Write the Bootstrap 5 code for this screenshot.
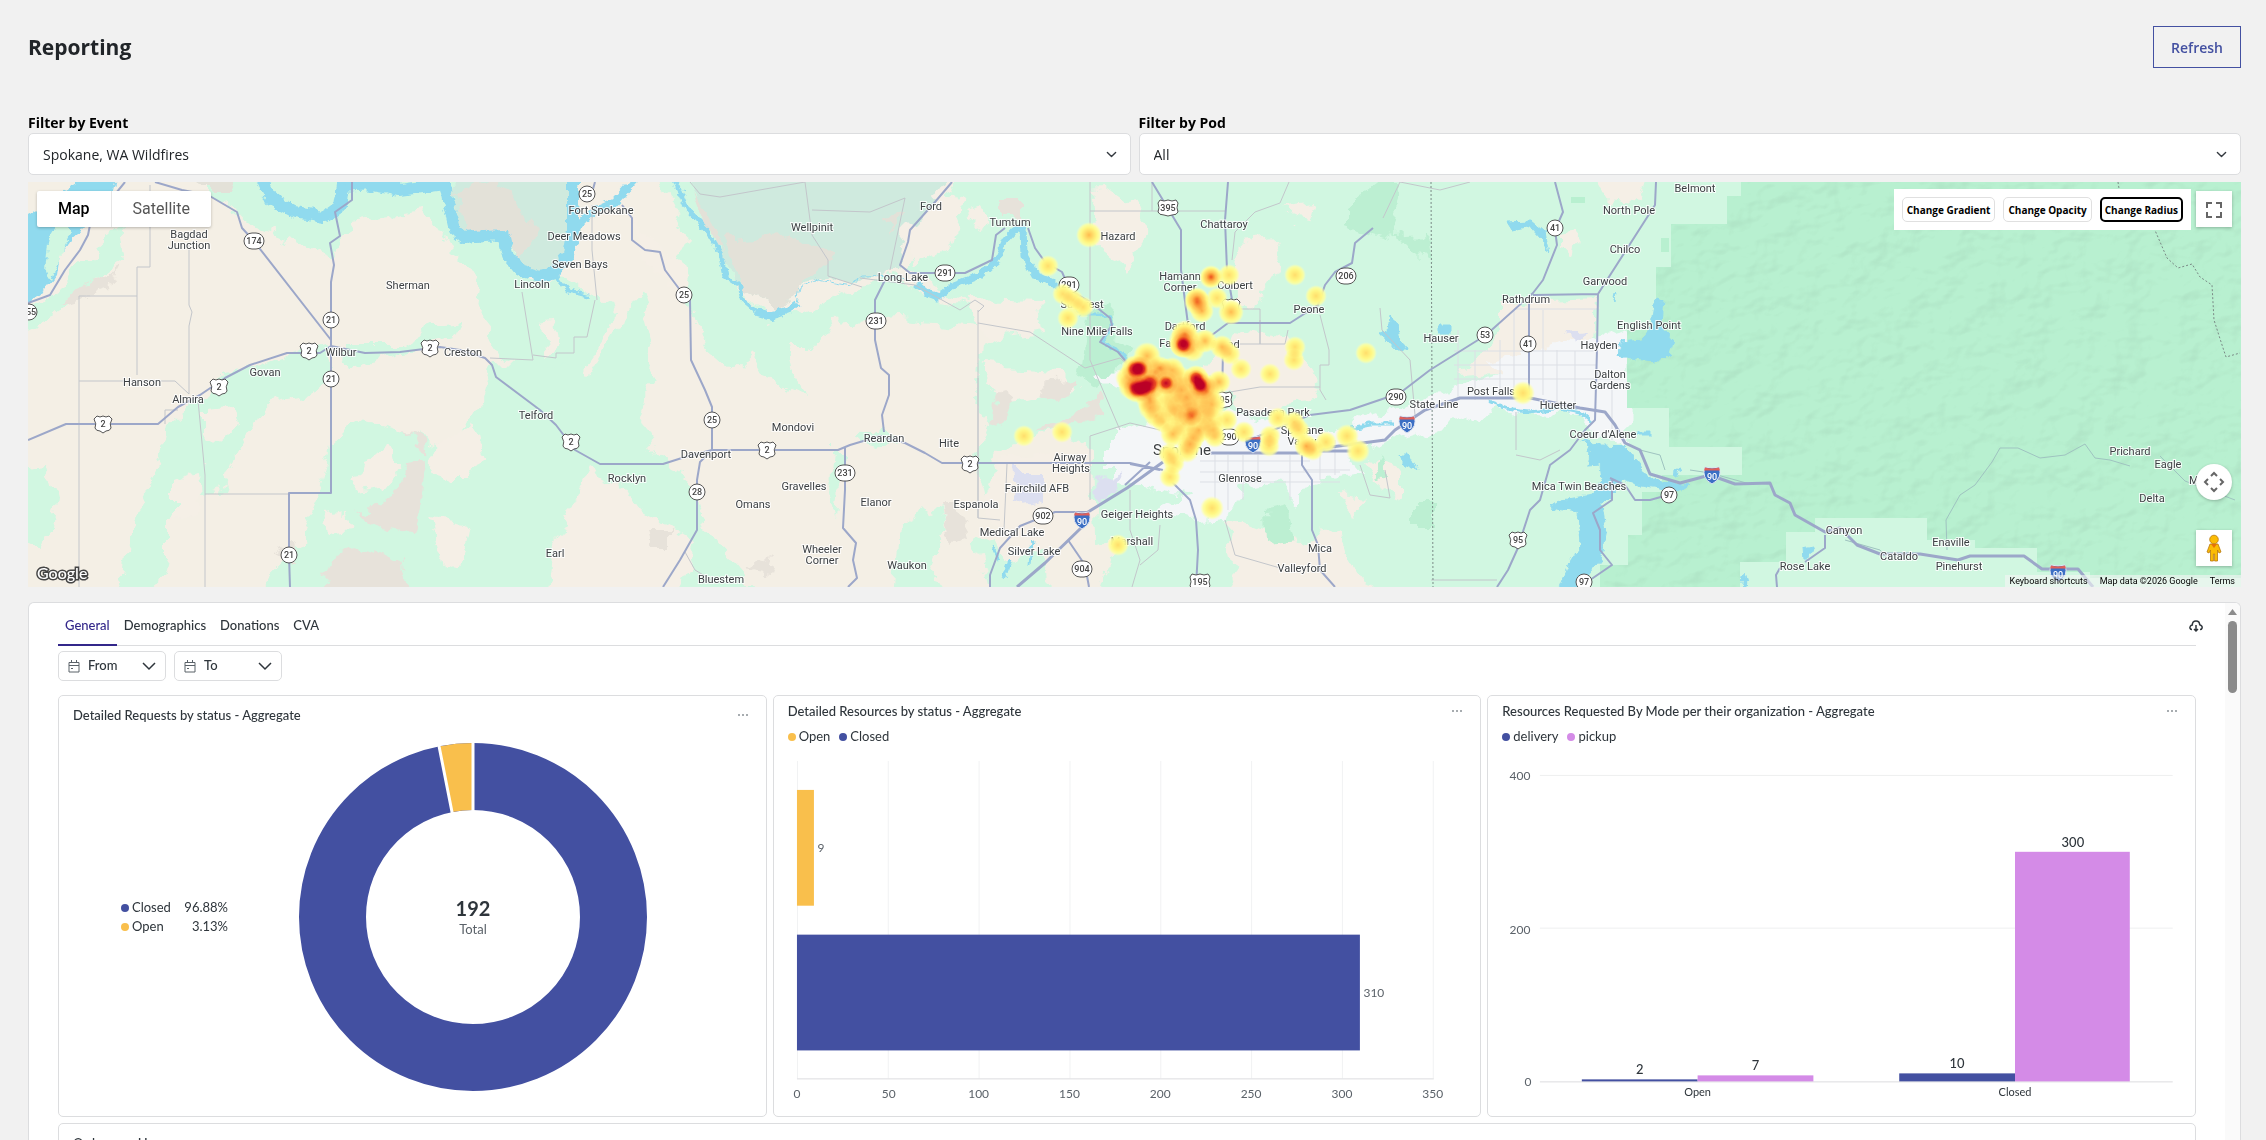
<!DOCTYPE html>
<html lang="en">
<head>
<meta charset="utf-8">
<meta name="viewport" content="width=device-width, initial-scale=1">
<title>Reporting</title>
<link href="https://cdn.jsdelivr.net/npm/bootstrap@5.3.0/dist/css/bootstrap.min.css" rel="stylesheet">
<style>
  :root { --ink:#2e353b; --indigo:#4350a1; --amber:#f9bf4c; --orchid:#d48be7; --line:#dcdddf; }
  body { background:#f1f1f1; font-family:"Open Sans","Noto Sans",sans-serif; font-size:14px; color:#212529; }
  .page-shell { height:100vh; padding:0 25px 0 28px; }
  .page-head { padding-top:26px; height:113px; }
  .page-title { font-size:21px; line-height:42px; font-weight:700; }
  .btn-refresh { height:42px; padding:0 17px; border:1px solid var(--indigo); border-radius:0; color:var(--indigo); font-size:14px; font-weight:600; }
  .filter-label { font-size:14px; line-height:20px; font-weight:700; color:#000; }
  .filter-select { height:42px; padding-left:14px; border-color:var(--line); border-radius:5px; font-size:14px; background-size:13px 11px; }
  .map-box { height:405px; margin-top:7px; font-family:Roboto,sans-serif; }
  .map-box > svg { width:100%; height:100%; display:block; }
  .town { font:11px Roboto,sans-serif; fill:#3c4043; stroke:#fff; stroke-width:2px; stroke-opacity:.85; paint-order:stroke; text-anchor:middle; }
  .town-lg { font-size:15px; }
  .route-no text { font:500 9px Roboto,sans-serif; fill:#444; text-anchor:middle; }
  .route-no .on-blue { fill:#fff; }
  .over { position:absolute; background:#fff; box-shadow:0 1px 3px rgba(0,0,0,.25); }
  .map-type { left:9px; top:9px; height:36px; border-radius:2px; }
  .map-type button { border:0; background:none; font-size:16px; color:#565656; padding:0 21px; }
  .map-type .chosen { color:#000; font-weight:500; border-right:1px solid #e6e6e6; }
  .heat-tools { right:50px; top:7px; height:41px; padding:8px; gap:8px; box-shadow:none; }
  .heat-tools button { border:1px solid #e0e0e0; border-radius:5px; background:#fff; font:700 10px/22px "Open Sans",sans-serif; padding:0 4px; color:#000; }
  .heat-tools .chosen { border:2px solid #000; line-height:20px; padding:0 3px; }
  .ctl { right:9px; width:36px; height:36px; border:0; padding:0; }
  .ctl-full { top:9px; } .ctl-move { top:282px; border-radius:50%; } .ctl-peg { top:348px; }
  .map-foot { right:0; bottom:0; font-size:9px; line-height:12px; gap:12px; background:rgba(245,245,245,.6); box-shadow:none; padding:0 6px 0 5px; }
  .map-foot a, .map-foot span { color:#000; text-decoration:none; }
  .map-logo { left:6px; bottom:1px; background:none; box-shadow:none; }
  .board { margin-top:15px; border:1px solid var(--line); border-bottom:0; border-radius:6px 6px 0 0; background:#fff; font-family:Lato,sans-serif; color:var(--ink); min-height:0; }
  .board-body { padding:3px 29px 0; min-width:0; }
  .board-tabs { height:40px; border-bottom:1px solid var(--line); }
  .board-tabs nav button { border:0; background:none; padding:3px 7px 0; font-size:13px; height:40px; font-weight:500; color:var(--ink); border-bottom:2px solid transparent; }
  .board-tabs nav .chosen { color:#33278a; border-color:#33278a; }
  .btn-cloud { border:0; background:none; padding:0; margin-right:-7px; line-height:0; }
  .date-row { padding-top:5px; }
  .btn-date { width:108px; height:30px; border:1px solid var(--line); border-radius:5px; background:#fff; padding:0 9px; font-size:13px; font-weight:500; color:var(--ink); gap:8px; }
  .tiles { display:grid; grid-template-columns:repeat(3,1fr); gap:6px; margin-top:14px; }
  .tile { border:1px solid var(--line); border-radius:5px; background:#fff; height:422px; }
  .tile-wide { grid-column:1/-1; height:200px; }
  .tile-head { height:30px; padding:0 16px 0 14px; }
  .tile-tall { height:36px; padding-top:2px; }
  .tile-name { font-size:13px; line-height:20px; font-weight:500; }
  .more { border:0; background:none; padding:0; width:14px; line-height:0; }
  .key { font-size:13px; line-height:20px; padding:0 14px; gap:9px; }
  .key i, .ratio-key i { width:8px; height:8px; border-radius:50%; display:inline-block; margin-right:3px; }
  .donut-row { padding-top:10px; }
  .ratio-key { font-size:13px; line-height:19px; width:107px; margin-left:62px; }
  .ratio-key td { padding:0; }
  .donut { margin-left:70px; width:350px; }
  .c-in { background:var(--indigo); } .c-am { background:var(--amber); } .c-or { background:var(--orchid); }
  .t12 { font:12px Lato,sans-serif; fill:#5b6269; text-anchor:middle; }
  .t11 { font:11px Lato,sans-serif; fill:var(--ink); text-anchor:middle; }
  .t13 { font:500 13px Lato,sans-serif; fill:var(--ink); text-anchor:middle; }
  .track { width:15px; background:#fafafa; padding-top:6px; gap:6px; }
  .thumb { width:9px; height:72px; border-radius:5px; background:#8b8b8b; }
</style>
</head>
<body>
<main class="page-shell d-flex flex-column overflow-hidden">
  <header class="page-head d-flex flex-shrink-0 justify-content-between align-items-start">
    <h1 class="page-title m-0">Reporting</h1>
    <button class="btn btn-refresh" type="button">Refresh</button>
  </header>
  <div class="row gx-2">
    <div class="col-6">
      <label class="filter-label d-block" for="event">Filter by Event</label>
      <select class="form-select filter-select" id="event"><option>Spokane, WA Wildfires</option></select>
    </div>
    <div class="col-6">
      <label class="filter-label d-block" for="pod">Filter by Pod</label>
      <select class="form-select filter-select" id="pod"><option>All</option></select>
    </div>
  </div>

  <section class="map-box position-relative overflow-hidden flex-shrink-0" aria-label="Request heat map">
    <svg viewBox="28 182 2213 405" preserveAspectRatio="xMidYMid slice">
      <defs>
        <filter id="rough" x="0" y="0" width="1" height="1"><feTurbulence type="fractalNoise" baseFrequency=".045" numOctaves="4" seed="7"/><feDisplacementMap in="SourceGraphic" scale="24" xChannelSelector="R" yChannelSelector="G"/></filter>
        <filter id="shore" x="-.1" y="-.1" width="1.2" height="1.2"><feTurbulence type="fractalNoise" baseFrequency=".12" numOctaves="3" seed="3"/><feDisplacementMap in="SourceGraphic" scale="8" xChannelSelector="R" yChannelSelector="G"/></filter>
        <filter id="relief" x="0" y="0" width="1" height="1" color-interpolation-filters="sRGB"><feTurbulence type="fractalNoise" baseFrequency=".03 .04" numOctaves="3" seed="11"/><feColorMatrix values="0 0 0 0 0  0 0 0 0 0  0 0 0 0 0  1 0 0 0 0"/><feDiffuseLighting surfaceScale="9" diffuseConstant="1.3" lighting-color="#fff"><feDistantLight azimuth="225" elevation="50"/></feDiffuseLighting><feComposite in2="SourceGraphic" operator="in"/></filter>
        <filter id="heat" x="0" y="0" width="1" height="1" color-interpolation-filters="sRGB">
          <feColorMatrix values="0 0 0 1 0  0 0 0 1 0  0 0 0 1 0  0 0 0 1 0"/>
          <feComponentTransfer>
            <feFuncR type="table" tableValues="1 1 1 1 1 1 .98 .95 .88 .74 .72"/>
            <feFuncG type="table" tableValues="1 1 .97 .9 .82 .74 .6 .42 .2 0 0"/>
            <feFuncB type="table" tableValues=".7 .6 .52 .45 .38 .32 .22 .15 .14 .15 .15"/>
            <feFuncA type="table" tableValues="0 .85 1 1 1 1 1 1 1 1 1"/>
          </feComponentTransfer>
        </filter>
        <radialGradient id="d3"><stop offset="0" stop-opacity=".34"/><stop offset=".5" stop-opacity=".2"/><stop offset="1" stop-opacity="0"/></radialGradient>
        <radialGradient id="d5"><stop offset="0" stop-opacity=".5"/><stop offset=".5" stop-opacity=".25"/><stop offset="1" stop-opacity="0"/></radialGradient>
        <radialGradient id="d8"><stop offset="0" stop-opacity=".88"/><stop offset=".35" stop-opacity=".72"/><stop offset=".65" stop-opacity=".22"/><stop offset="1" stop-opacity="0"/></radialGradient>
        <rect id="st" x="-8" y="-8" width="16" height="16" rx="8" fill="#fff" stroke="#555"/>
        <rect id="stw" x="-10" y="-8" width="20" height="16" rx="8" fill="#fff" stroke="#555"/>
        <path id="us" d="M-6-8Q-3-6 0-8Q3-6 6-8L9-5Q6 0 8 4Q7 7 3 7L0 9L-3 7Q-7 7-8 4Q-6 0-9-5Z" fill="#fff" stroke="#555"/>
        <path id="usw" d="M-8-8Q-4-6 0-8Q4-6 8-8L10-5Q8 0 10 4Q9 7 4 7L0 8L-4 7Q-9 7-10 4Q-8 0-10-5Z" fill="#fff" stroke="#555"/>
        <g id="ih"><path d="M-7-8Q0-6 7-8Q11 3 0 9Q-11 3-7-8Z" fill="#3c6fc4" stroke="#dfe5f2"/><path d="M-7-7.500Q0-5.500 7-7.500L8-4.500H-8Z" fill="#e0605a"/></g>
      </defs>
      <rect x="28" y="182" width="2213" height="405" fill="#f4efe5"/>
      <!-- vegetation -->
      <g filter="url(#rough)">
        <rect x="0" y="150" width="2300" height="480" fill="none"/>
        <g fill="#d1f7e1">
          <path d="M210 170H460L462 236H508L525 278L570 280L615 305L600 345L575 380L540 372L515 372L500 345L478 320L482 290L460 255L440 235L425 212L350 222L335 260L290 240L250 225L210 195Z"/>
          <path d="M20 470L46 467L54 500L50 532L38 548L20 540ZM20 310L60 290L80 262L120 225L125 260L85 290L50 320L20 330Z"/>
          <path d="M195 405L225 372L262 366L300 350L325 342L336 380L310 395L280 400L258 408L248 435L235 455L222 490L190 500L165 520L165 560L155 600H120L128 545L145 500L160 455L165 430Z"/>
          <path d="M335 345L400 345L440 322L462 320L455 338L410 352L350 365Z"/>
          <path d="M335 440L355 420L395 430L450 445L480 405L492 360L540 362L590 372L640 290L655 345L640 420L655 455L690 480L705 530L720 550L765 600H250L288 560L305 530L318 500Z"/>
          <path d="M655 170H690L724 260L748 300L770 322L800 312L890 275L930 300L970 305L978 325L900 318L835 322L815 348L785 348L790 372L806 394L770 382L752 352L730 372L700 345L688 300L665 265L690 240Z"/>
          <path d="M905 270L925 235L945 200L965 170H2280V620H1090L1100 586L1120 540L1094 545L1092 450L1060 430L990 455L1000 480L985 500L975 460L990 420L975 400L980 345L1020 320L960 300Z"/>
          <path d="M900 525L940 508L945 530L930 570L950 600H895ZM975 540L1040 530L1050 600H990ZM690 560L740 575L760 600H690Z"/>
          <path d="M835 450H845L840 520L832 490ZM850 440L880 424L905 440L880 446Z"/>
        </g>
        <g fill="#f5efe6">
          <path d="M545 600L553 545L575 500L590 470L625 490L640 512L700 545L670 600ZM440 440L472 425L480 455L470 478L445 478L432 460ZM360 462L392 448L402 465L385 487L355 492ZM432 520L470 525L462 562L445 568ZM325 515L346 512L350 532L328 535ZM205 408L232 405L238 425L215 445L205 435ZM175 480L200 470L203 510L175 515Z"/>
          <path d="M900 190L945 182L962 205L950 250L915 268L905 240ZM1092 190L1115 187L1138 205L1150 240L1125 272L1098 252ZM1240 244L1272 240L1280 262L1250 312L1225 285ZM1285 208L1315 204L1310 222L1292 220ZM1230 330L1290 338L1322 385L1310 402L1240 410L1200 372ZM970 300L1040 302L1045 332L1000 338L975 322ZM980 368L1060 372L1080 392L1000 402ZM1000 458L1090 450L1094 540L1005 560L985 500Z"/>
          <path d="M1500 302L1597 298L1592 368L1460 375L1500 330ZM1230 515L1300 542L1340 528L1350 560L1380 600H1240L1228 550ZM1340 495L1368 498L1350 518ZM1365 460L1400 470L1400 500L1380 490ZM1595 175H1650L1640 204L1610 200ZM1560 238L1578 235L1574 255L1560 252ZM630 220L690 270L680 300L650 270ZM970 210L985 205L990 220L975 225ZM540 325L555 322L560 345L545 355Z"/>
          <path d="M2144 230L2168 238L2160 258L2150 258ZM2008 390L2030 368L2045 382L2025 385L2012 395ZM2200 410L2228 396L2210 400Z" fill="#f6dfcb"/>
        </g>
        <g fill="#e7e2da">
          <path d="M405 432L425 440L428 455L412 445ZM405 465L428 462L418 512L412 532L390 530L355 510L385 506L400 482ZM340 550L358 545L402 562L410 600H318ZM270 560L295 540L298 565ZM80 290L118 270L108 290L60 305ZM650 530L672 530L672 550L655 550ZM1000 200H1025V220H1000ZM1040 385L1075 380L1075 395L1045 398ZM1000 390L1012 400L1005 425L990 420ZM1035 435L1100 395L1105 415L1060 430ZM940 505L955 505L965 540L950 550ZM745 568L775 556L770 572Z"/>
        </g>
        <g fill="#cfeade"><path d="M452 170H575L578 230L562 262L545 275L522 268L508 235L480 232L458 236Z"/><path d="M685 170H955L930 205L905 230L895 272L862 275L800 285L778 312L745 290L722 262L700 215Z"/></g>
        <path d="M455 190L500 182L540 230L520 262L508 232L470 234ZM722 240L790 235L830 260L800 285L778 312L745 290ZM690 195L708 215L720 250L700 225ZM885 215L900 210L895 235ZM185 170H232L228 190L200 190Z" fill="#e3e1d8"/>
        <path d="M1088 312L1116 300L1112 340L1132 345L1100 392L1078 375ZM1345 208L1380 182L1400 182L1390 238L1428 236L1432 268L1408 244L1345 225ZM1415 500H1435V526H1415ZM1265 510L1288 505L1294 540L1266 545ZM1382 455L1388 480L1375 478Z" fill="#bcefd2"/>
        <path d="M1110 432L1160 420L1200 410L1330 428L1400 408L1450 392L1500 372L1490 360L1590 340L1630 330L1628 445L1600 440L1580 415L1500 410L1420 432L1350 455L1360 478L1300 485L1300 505L1280 480L1240 485L1230 515L1190 518L1155 512L1190 495L1150 488L1110 475ZM1095 375L1135 372L1140 395L1110 390Z" fill="#f4f6f8"/>
        <path d="M1015 470H1045V500L1018 505ZM1095 480L1120 470L1122 490L1098 500ZM1565 332L1588 330L1580 345Z" fill="#dcdff0"/>
      </g>
      <g fill="#b8f0d0">
        <path d="M1741 182V196H1727V224H1671V267H1656V330H1627V408H1669V447H1742V475H1662V492H1642V535H1628V565H1600V587H1740V562H1786V532H1815V518H1927V540H1975V548H2037V572H2090V578H2241V182Z"/>
        <path d="M1571 197H1585V203H1571ZM1661 238H1669V252H1661Z"/>
      </g>
      <g filter="url(#relief)" opacity=".05" style="mix-blend-mode:multiply"><path d="M1741 182V196H1727V224H1671V267H1656V330H1627V408H1669V447H1742V475H1662V492H1642V535H1628V565H1600V587H1740V562H1786V532H1815V518H1927V540H1975V548H2037V572H2090V578H2241V182Z"/></g>
      <!-- water -->
      <g filter="url(#shore)" fill="#90daee" stroke="#90daee">
        <path d="M20 218L45 205L60 195L75 185V175H118L112 200L95 213L85 225L78 235L72 240L60 255L57 275L45 290L20 308Z" stroke="none"/>
        <path d="M50 235L62 215L72 232L60 258L50 282L46 270Z" fill="#d1f7e1" stroke="none"/>
        <g fill="none" stroke-linejoin="round">
          <path d="M262 178L272 200L295 212L325 217L340 206L343 186L400 182" stroke-width="12"/>
          <path d="M345 180L400 190L445 184L449 205L455 230L465 238L485 236L503 235L508 255L520 270L540 276L555 272L568 255L573 230V178" stroke-width="12"/>
          <path d="M553 272L567 290L590 296" stroke-width="4"/>
          <path d="M572 232L590 213L615 202L635 180" stroke-width="8"/>
          <path d="M675 180L688 210L707 230L720 252L725 276L740 286L743 300L757 312" stroke-width="5"/>
          <path d="M757 312L772 316L788 310L797 303" stroke-width="8"/>
          <path d="M797 303L800 287L815 279L850 286L862 277L900 276L915 282" stroke-width="1"/>
          <path d="M917 283L930 294L938 297L952 286L980 275L996 262L1005 240L1014 230L1023 228L1024 255L1035 275L1052 283L1068 298" stroke-width="7"/>
          <path d="M1068 298L1082 314L1098 314L1112 318V328L1102 343L1122 352L1128 365" stroke-width="3"/>
          <path d="M1350 428L1370 424L1395 424M1488 401L1512 410L1530 412L1560 408L1580 412L1592 422M1004 578L1010 560M994 545L998 560M1032 540L1030 565" stroke-width="3"/>
        </g>
        <path d="M1583 440L1600 446L1625 447L1640 465L1647 476L1665 482L1690 485L1680 491L1640 485L1620 478L1615 492L1602 505L1606 530L1600 560L1575 590H1558L1570 560L1580 545L1578 512L1550 508L1562 500L1592 495L1602 480L1600 465L1588 466L1590 452Z"/>
        <path d="M1656 297L1663 300L1661 325L1674 340L1670 355L1655 362L1618 356L1620 342L1642 340L1652 325ZM1507 222L1532 221L1545 232L1549 253L1543 240L1530 226L1512 230ZM1390 316L1397 322L1400 340L1408 350L1395 350L1380 333L1388 330ZM1400 455L1410 455L1418 471L1404 465ZM1440 325H1450V334H1440ZM1803 548L1813 546L1810 556L1804 560ZM1744 573L1748 587H1741ZM1612 297L1615 293L1614 302ZM1636 432H1650V436H1636ZM1672 475L1680 468L1676 478Z"/>
      </g>
      <!-- minor roads, borders -->
      <g fill="none" stroke="#c3c6cb">
        <path d="M79 587V296H137M137 296V375M150 185V267H137V296M79 381H175L189 394V326L192 312L189 305V245M198 400L205 475V587M205 494H289M522 292L533 360L490 358M595 300L587 337H574V353H556V358L533 355M592 205V250L597 300M165 424V410H178M685 552L695 570L715 582"/>
        <path d="M978 518V310M978 323L1030 332L1085 368L1120 358L1135 372M978 378V518L1000 520M1090 182V270V360L1120 430M1090 211H1152M1152 182V211H1226M1280 203L1289 182M1280 203L1255 212L1235 232L1232 260M1090 436L1130 423L1160 430M1007 464L1004 530M1090 436V500M1130 490V530L1140 560L1132 587M1160 525L1158 550L1140 565M1225 520L1235 555L1280 568M1260 320V344H1225M1225 309H1260V344H1285L1288 330M1320 315L1329 350V365H1320V390L1326 400M1230 392L1260 387H1320M1383 218L1400 182L1440 190L1470 182M1380 308L1382 330L1410 360L1415 415M1431 580H1497M1516 455L1540 460L1560 450M1516 412V450M1360 465L1370 495L1390 498L1385 470M805 182L812 235L828 260V276L862 287M700 194L720 197L805 182M812 210L870 212L905 198L890 270M700 194L690 182M860 278L915 285L960 310L975 300L984 306L978 312"/>
        <path d="M1454 351H1597M1454 365H1597M1454 379H1620M1458 330V400M1475 350V400M1500 340V395M1514 310V395M1543 310V395M1557 350V405M1514 309H1597M1575 351V405M1612 380V440M1200 461H1310M1200 472H1340M1200 482H1340M1215 455V500M1228 455V510M1243 455V500M1258 455V482M1290 455V500M1303 470H1350M1320 440V480M1335 440V475" stroke="#dcdfe5"/>
        <path d="M1845 540L1880 550L1886 557M1947 550L1946 520L1960 495L1975 485L1992 462L2000 448L2018 448L2040 458L2065 455L2085 444L2095 458L2110 460L2130 466M2160 456L2185 481L2235 500M1690 470L1710 473L1750 484M1640 450L1660 455L1665 470" stroke="#9fc3c0"/>
      </g>
      <g fill="none" stroke="#7a8a86" stroke-dasharray="2 2"><path d="M1431 182L1433 587M2118 182L2120 195M2154 228L2167 258L2178 268L2192 264L2200 277L2212 285L2214 320L2223 348L2226 357L2240 353"/></g>
      <!-- highways -->
      <g fill="none" stroke="#9ca7c9" stroke-width="2" stroke-linejoin="round">
        <path d="M155 182L182 190L208 195L237 212L242 228L253 240L331 340M352 182V200L335 212L340 236L330 243L334 265L331 282V493H289V555L290 587"/>
        <path d="M28 440L66 424H158L178 407L200 395L225 378L250 365L287 353H320L331 346L365 353L400 352L440 347L460 350L485 358L492 365L496 377L540 410L556 425L575 450L600 464H663L685 457L712 450H838L850 445L880 436L905 443L925 453L942 463H1130L1163 470"/>
        <path d="M28 303L50 295L65 270L80 250L88 235L90 225L125 182M595 182L590 200M622 205L632 218V240L645 250L660 252L665 270L680 290L690 300L691 360L705 390L712 407V450L700 462L697 480V530L680 560L663 587"/>
        <path d="M952 182L935 202L910 230L908 242L900 265L910 273H965L992 260L996 235L1005 228M1028 228L1035 248L1045 262L1062 272L1070 290L1090 302L1110 318L1112 325L1100 342L1118 352L1128 364M885 280L875 300V340L881 368L889 375V395L882 415L884 432M845 448V490L843 528L856 543L853 560L857 578L848 587"/>
        <path d="M1152 182L1181 230V270L1190 340M1228 182L1225 220L1227 270L1232 300M1373 228L1355 243L1352 263L1335 272L1325 285L1318 305L1290 323H1228L1212 335M1223 350L1222 400"/>
        <path d="M1555 182L1563 212L1555 230L1557 245L1543 280L1533 293L1486 335L1430 370L1400 393L1350 410L1310 415L1254 438M1529 300V395M1533 295L1598 294L1655 205L1656 182M1598 294L1597 350L1595 420L1585 430L1570 450L1550 465L1540 500L1530 510L1517 550L1508 570L1497 587"/>
        <path d="M990 587V575L1000 548L1020 526L1055 512H1088M1068 540L1085 565L1089 587M1165 475L1190 500L1196 520L1198 550L1196 587M1302 455V465L1312 480V530L1318 545L1320 570L1335 587M1130 464L1160 470M1125 485L1150 462M1610 478L1625 485L1635 500H1650L1668 495M1612 480V500L1593 513L1600 530V550L1612 565L1590 580M1825 535V548L1805 562M1780 568L1776 575L1777 587"/>
        <path d="M1017 587L1045 563L1082 527L1088 512L1127 488L1163 462M1210 453H1300M1300 451L1370 442L1385 440L1395 430L1425 410L1460 398H1530L1580 408L1605 412L1615 425L1625 443L1640 450L1650 474L1680 483L1710 475L1735 484L1770 483L1775 495L1790 503L1795 515L1825 532L1840 528L1857 545L1880 554H1920L1958 560L1970 556H2024L2042 569H2078L2093 587M1300 451H1360" stroke-width="3"/>
      </g>
      <g class="route-no">
        <use href="#stw" x="254" y="241"/><text x="254" y="244">174</text>
        <use href="#st" x="587" y="194"/><text x="587" y="197">25</text>
        <use href="#st" x="331" y="320"/><text x="331" y="323">21</text>
        <use href="#st" x="331" y="379"/><text x="331" y="382">21</text>
        <use href="#st" x="289" y="555"/><text x="289" y="558">21</text>
        <use href="#st" x="29" y="312"/><text x="31" y="315">55</text>
        <use href="#us" x="309" y="351"/><text x="309" y="354">2</text>
        <use href="#us" x="430" y="348"/><text x="430" y="351">2</text>
        <use href="#us" x="219" y="387"/><text x="219" y="390">2</text>
        <use href="#us" x="103" y="424"/><text x="103" y="427">2</text>
        <use href="#us" x="571" y="442"/><text x="571" y="445">2</text>
        <use href="#us" x="767" y="450"/><text x="767" y="453">2</text>
        <use href="#us" x="970" y="464"/><text x="970" y="467">2</text>
        <use href="#st" x="684" y="295"/><text x="684" y="298">25</text>
        <use href="#st" x="712" y="420"/><text x="712" y="423">25</text>
        <use href="#st" x="697" y="492"/><text x="697" y="495">28</text>
        <use href="#stw" x="876" y="321"/><text x="876" y="324">231</text>
        <use href="#stw" x="845" y="473"/><text x="845" y="476">231</text>
        <use href="#stw" x="945" y="273"/><text x="945" y="276">291</text>
        <use href="#stw" x="1069" y="285"/><text x="1069" y="288">291</text>
        <use href="#stw" x="1043" y="516"/><text x="1043" y="519">902</text>
        <use href="#stw" x="1082" y="569"/><text x="1082" y="572">904</text>
        <use href="#usw" x="1168" y="208"/><text x="1168" y="211">395</text>
        <use href="#usw" x="1200" y="582"/><text x="1200" y="585">195</text>
        <use href="#us" x="1231" y="307"/>
        <use href="#usw" x="1222" y="400"/><text x="1222" y="403">395</text>
        <use href="#stw" x="1346" y="276"/><text x="1346" y="279">206</text>
        <use href="#stw" x="1229" y="437"/><text x="1229" y="440">290</text>
        <use href="#stw" x="1396" y="397"/><text x="1396" y="400">290</text>
        <use href="#st" x="1485" y="335"/><text x="1485" y="338">53</text>
        <use href="#st" x="1555" y="228"/><text x="1555" y="231">41</text>
        <use href="#st" x="1528" y="344"/><text x="1528" y="347">41</text>
        <use href="#us" x="1518" y="540"/><text x="1518" y="543">95</text>
        <use href="#st" x="1669" y="495"/><text x="1669" y="498">97</text>
        <use href="#st" x="1584" y="582"/><text x="1584" y="585">97</text>
        <use href="#ih" x="1082" y="520"/><text class="on-blue" x="1082" y="525">90</text>
        <use href="#ih" x="1253" y="444"/><text class="on-blue" x="1253" y="449">90</text>
        <use href="#ih" x="1407" y="424"/><text class="on-blue" x="1407" y="429">90</text>
        <use href="#ih" x="1712" y="475"/><text class="on-blue" x="1712" y="480">90</text>
        <use href="#ih" x="2058" y="573"/><text class="on-blue" x="2058" y="578">90</text>
      </g>
      <g class="town">
        <text x="189" y="238">Bagdad</text><text x="189" y="249">Junction</text><text x="601" y="214">Fort Spokane</text><text x="584" y="240">Deer Meadows</text><text x="580" y="268">Seven Bays</text><text x="532" y="288">Lincoln</text><text x="408" y="289">Sherman</text><text x="341" y="356">Wilbur</text><text x="463" y="356">Creston</text><text x="265" y="376">Govan</text><text x="142" y="386">Hanson</text><text x="188" y="403">Almira</text><text x="536" y="419">Telford</text><text x="706" y="458">Davenport</text><text x="627" y="482">Rocklyn</text><text x="753" y="508">Omans</text><text x="555" y="557">Earl</text><text x="721" y="583">Bluestem</text><text x="812" y="231">Wellpinit</text><text x="931" y="210">Ford</text><text x="1010" y="226">Tumtum</text><text x="1118" y="240">Hazard</text><text x="903" y="281">Long Lake</text><text x="1082" y="308">Suncrest</text><text x="1097" y="335">Nine Mile Falls</text><text x="793" y="431">Mondovi</text><text x="884" y="442">Reardan</text><text x="949" y="447">Hite</text><text x="1070" y="461">Airway</text><text x="1071" y="472">Heights</text><text x="804" y="490">Gravelles</text><text x="876" y="506">Elanor</text><text x="976" y="508">Espanola</text><text x="1037" y="492">Fairchild AFB</text><text x="1012" y="536">Medical Lake</text><text x="1034" y="555">Silver Lake</text><text x="822" y="553">Wheeler</text><text x="822" y="564">Corner</text><text x="907" y="569">Waukon</text><text x="1137" y="518">Geiger Heights</text><text x="1132" y="545">Marshall</text><text x="1224" y="228">Chattaroy</text><text x="1180" y="280">Hamann</text><text x="1180" y="291">Corner</text><text x="1235" y="289">Colbert</text><text x="1185" y="330">Dartford</text><text x="1182" y="347">Fairwood</text><text x="1226" y="348">Mead</text><text x="1309" y="313">Peone</text><text x="1273" y="416">Pasadena Park</text><text x="1302" y="434">Spokane</text><text x="1302" y="445">Valley</text><text class="town-lg" x="1182" y="455">Spokane</text><text x="1240" y="482">Glenrose</text><text x="1320" y="552">Mica</text><text x="1302" y="572">Valleyford</text><text x="1441" y="342">Hauser</text><text x="1526" y="303">Rathdrum</text><text x="1434" y="408">State Line</text><text x="1491" y="395">Post Falls</text><text x="1558" y="409">Huetter</text><text x="1579" y="490">Mica Twin Beaches</text><text x="1603" y="438">Coeur d'Alene</text><text x="1695" y="192">Belmont</text><text x="1629" y="214">North Pole</text><text x="1625" y="253">Chilco</text><text x="1605" y="285">Garwood</text><text x="1649" y="329">English Point</text><text x="1599" y="349">Hayden</text><text x="1610" y="378">Dalton</text><text x="1610" y="389">Gardens</text><text x="1844" y="534">Canyon</text><text x="1899" y="560">Cataldo</text><text x="1805" y="570">Rose Lake</text><text x="1951" y="546">Enaville</text><text x="1959" y="570">Pinehurst</text><text x="2130" y="455">Prichard</text><text x="2168" y="468">Eagle</text><text x="2152" y="502">Delta</text><text x="2206" y="484">Murray</text>
      </g>
      <g filter="url(#heat)">
        <rect x="28" y="182" width="2212" height="405" fill="none"/>
        <g fill="url(#d3)">
          <circle cx="1048" cy="266" r="11"/><circle cx="1063" cy="294" r="11"/><circle cx="1073" cy="300" r="11"/><circle cx="1083" cy="307" r="11"/><circle cx="1068" cy="318" r="11"/><circle cx="1024" cy="436" r="11"/><circle cx="1062" cy="432" r="11"/><circle cx="1118" cy="545" r="11"/><circle cx="1229" cy="275" r="11"/><circle cx="1295" cy="275" r="11"/><circle cx="1316" cy="296" r="11"/><circle cx="1217" cy="298" r="11"/><circle cx="1193" cy="350" r="12"/><circle cx="1230" cy="354" r="11"/><circle cx="1241" cy="369" r="11"/><circle cx="1270" cy="374" r="11"/><circle cx="1295" cy="347" r="11"/><circle cx="1294" cy="360" r="11"/><circle cx="1366" cy="353" r="11"/><circle cx="1127" cy="378" r="12"/><circle cx="1155" cy="372" r="13"/><circle cx="1180" cy="380" r="14"/><circle cx="1182" cy="390" r="14"/><circle cx="1170" cy="392" r="14"/><circle cx="1187" cy="397" r="14"/><circle cx="1180" cy="406" r="13"/><circle cx="1195" cy="402" r="14"/><circle cx="1150" cy="408" r="12"/><circle cx="1156" cy="416" r="12"/><circle cx="1163" cy="422" r="11"/><circle cx="1175" cy="414" r="11"/><circle cx="1168" cy="406" r="12"/><circle cx="1183" cy="424" r="13"/><circle cx="1203" cy="412" r="13"/><circle cx="1210" cy="420" r="13"/><circle cx="1213" cy="430" r="11"/><circle cx="1215" cy="437" r="11"/><circle cx="1193" cy="438" r="12"/><circle cx="1190" cy="444" r="12"/><circle cx="1187" cy="451" r="12"/><circle cx="1169" cy="454" r="11"/><circle cx="1174" cy="463" r="11"/><circle cx="1170" cy="477" r="11"/><circle cx="1227" cy="420" r="11"/><circle cx="1244" cy="432" r="11"/><circle cx="1278" cy="418" r="11"/><circle cx="1294" cy="422" r="11"/><circle cx="1299" cy="430" r="11"/><circle cx="1270" cy="436" r="11"/><circle cx="1269" cy="446" r="11"/><circle cx="1313" cy="450" r="11"/><circle cx="1326" cy="442" r="11"/><circle cx="1347" cy="436" r="12"/><circle cx="1358" cy="451" r="12"/><circle cx="1212" cy="508" r="12"/><circle cx="1523" cy="393" r="12"/>
        </g>
        <g fill="url(#d5)">
          <circle cx="1089" cy="235" r="13"/><circle cx="1202" cy="311" r="12"/><circle cx="1231" cy="312" r="13"/><circle cx="1205" cy="341" r="12"/><circle cx="1222" cy="347" r="12"/><circle cx="1185" cy="334" r="14"/><circle cx="1147" cy="356" r="14"/><circle cx="1160" cy="368" r="12"/><circle cx="1172" cy="370" r="13"/><circle cx="1150" cy="400" r="14"/><circle cx="1206" cy="391" r="14"/><circle cx="1212" cy="404" r="14"/><circle cx="1173" cy="434" r="13"/><circle cx="1199" cy="430" r="13"/><circle cx="1306" cy="446" r="12"/><circle cx="1132" cy="386" r="14"/><circle cx="1219" cy="382" r="12"/><circle cx="1190" cy="414" r="13"/><circle cx="1202" cy="386" r="14"/><circle cx="1197" cy="302" r="13"/><circle cx="1211" cy="277" r="12"/><circle cx="1211" cy="277" r="10"/><circle cx="1197" cy="299" r="12"/><circle cx="1192" cy="416" r="10"/><circle cx="1184" cy="342" r="16"/>
        </g>
        <g fill="url(#d8)">
          <circle cx="1183" cy="345" r="13"/><circle cx="1135" cy="369" r="14"/><circle cx="1140" cy="369" r="13"/><circle cx="1150" cy="384" r="16"/><circle cx="1137" cy="389" r="14"/><circle cx="1143" cy="388" r="14"/><circle cx="1166" cy="383" r="12"/><circle cx="1196" cy="378" r="13"/><circle cx="1200" cy="385" r="12"/>
        </g>
      </g>
    </svg>
    <div class="over map-type d-flex"><button class="chosen" type="button">Map</button><button type="button">Satellite</button></div>
    <div class="over heat-tools d-flex"><button type="button">Change Gradient</button><button type="button">Change Opacity</button><button class="chosen" type="button">Change Radius</button></div>
    <button class="over ctl ctl-full" type="button" aria-label="Full screen"><svg width="18" height="18" fill="none" stroke="#666" stroke-width="2"><path d="M2 7V2H7M11 2H16V7M16 11V16H11M7 16H2V11"/></svg></button>
    <button class="over ctl ctl-move" type="button" aria-label="Camera controls"><svg width="24" height="24" fill="none" stroke="#666" stroke-width="2"><path d="M9 6L12 3L15 6M9 18L12 21L15 18M6 9L3 12L6 15M18 9L21 12L18 15"/></svg></button>
    <button class="over ctl ctl-peg" type="button" aria-label="Street view"><svg width="20" height="28" viewBox="0 0 20 28"><path d="M6 10H14L17 18L15 19L13.500 16V27H10.600V20H9.400V27H6.500V16L5 19L3 18Z" fill="#fbbc04" stroke="#b8770f" stroke-width=".8"/><path d="M7 10L10 14L13 10Z" fill="#e8710a"/><circle cx="10" cy="5.500" r="4.300" fill="#fbbc04" stroke="#b8770f" stroke-width=".8"/></svg></button>
    <div class="over map-logo"><svg width="60" height="23" role="img" aria-label="Google"><text x="3" y="16" style="font:500 16px Lato,sans-serif;fill:#fff;stroke:#444;stroke-width:3px;paint-order:stroke">Google</text></svg></div>
    <div class="over map-foot d-flex"><a href="#">Keyboard shortcuts</a><span>Map data ©2026 Google</span><a href="#">Terms</a></div>
  </section>

  <section class="board d-flex flex-grow-1 overflow-hidden">
    <div class="board-body flex-grow-1">
      <div class="board-tabs d-flex align-items-center justify-content-between">
        <nav class="d-flex" aria-label="Report sections"><button class="chosen" type="button">General</button><button type="button">Demographics</button><button type="button">Donations</button><button type="button">CVA</button></nav>
        <button class="btn-cloud" type="button" aria-label="Download"><svg width="14" height="14" viewBox="0 0 14 14" fill="none" stroke="#2e353b" stroke-width="1.500"><path d="M3 10.500C1 10.500 .5 8.500 1.300 7.300C1.800 6.300 2.600 6 3.300 6C3.300 3.500 5 2 7 2S10.600 3.500 10.700 5.700C12.700 6.200 13.500 8 13 9.300C12.700 10.300 12 10.600 11 10.600M7 6V12M5 10L7 12L9 10"/></svg></button>
      </div>
      <div class="date-row d-flex gap-2">
        <button class="btn-date d-flex align-items-center" type="button"><svg width="12" height="13" fill="none" stroke="#5b6269"><path d="M1 2.500H11V12H1ZM1 5.500H11M3.500 0V2.500M8.500 0V2.500M3 8.500H5"/></svg>From<svg class="ms-auto" width="14" height="9" fill="none" stroke="#2e353b" stroke-width="1.500"><path d="M1 1L7 7L13 1"/></svg></button>
        <button class="btn-date d-flex align-items-center" type="button"><svg width="12" height="13" fill="none" stroke="#5b6269"><path d="M1 2.500H11V12H1ZM1 5.500H11M3.500 0V2.500M8.500 0V2.500M3 8.500H5"/></svg>To<svg class="ms-auto" width="14" height="9" fill="none" stroke="#2e353b" stroke-width="1.500"><path d="M1 1L7 7L13 1"/></svg></button>
      </div>
      <div class="tiles">
        <article class="tile">
          <div class="tile-head tile-tall d-flex justify-content-between align-items-center"><span class="tile-name">Detailed Requests by status - Aggregate</span><button class="more" type="button" aria-label="More"><svg width="14" height="4" fill="#8a9096"><circle cx="3" cy="2" r="1"/><circle cx="7" cy="2" r="1"/><circle cx="11" cy="2" r="1"/></svg></button></div>
          <div class="donut-row d-flex align-items-center">
            <table class="ratio-key">
              <tr><td><i class="c-in"></i>Closed</td><td class="text-end">96.88%</td></tr>
              <tr><td><i class="c-am"></i>Open</td><td class="text-end">3.13%</td></tr>
            </table>
            <svg class="donut" viewBox="-175 -175 350 350">
              <circle r="140.500" fill="none" stroke="#4350a1" stroke-width="67"/>
              <path d="M0-174A174 174 0 0 0-34-170.600L-20.900-105A107 107 0 0 1 0-107Z" fill="#f9bf4c"/>
              <path d="M0-175V-106M-34.200-172L-20.800-104" stroke="#fff" stroke-width="3"/>
              <text x="0" y="-1" text-anchor="middle" style="font:700 20px Lato,sans-serif;fill:#2e353b">192</text>
              <text x="0" y="17" text-anchor="middle" style="font:13px Lato,sans-serif;fill:#5b6269">Total</text>
            </svg>
          </div>
        </article>
        <article class="tile">
          <div class="tile-head d-flex justify-content-between align-items-center"><span class="tile-name">Detailed Resources by status - Aggregate</span><button class="more" type="button" aria-label="More"><svg width="14" height="4" fill="#8a9096"><circle cx="3" cy="2" r="1"/><circle cx="7" cy="2" r="1"/><circle cx="11" cy="2" r="1"/></svg></button></div>
          <div class="key d-flex"><span><i class="c-am"></i>Open</span><span><i class="c-in"></i>Closed</span></div>
          <svg class="d-block w-100" viewBox="773 746 708 365">
            <path d="M796.500 761V1079M887.500 761V1079M978.500 761V1079M1069.500 761V1079M1160.500 761V1079M1251.500 761V1079M1342.500 761V1079M1433.500 761V1079" stroke="#f1f2f3"/>
            <path d="M796 1079.500H1434" stroke="#dcdddf"/>
            <rect x="796" y="790" width="17" height="116" fill="#f9bf4c"/><rect x="796" y="935" width="564" height="116" fill="#4350a1"/>
            <g class="t12"><text x="820" y="852">9</text><text x="1374" y="997">310</text><text x="796" y="1099">0</text><text x="888" y="1099">50</text><text x="978" y="1099">100</text><text x="1069" y="1099">150</text><text x="1160" y="1099">200</text><text x="1251" y="1099">250</text><text x="1342" y="1099">300</text><text x="1433" y="1099">350</text></g>
          </svg>
        </article>
        <article class="tile">
          <div class="tile-head d-flex justify-content-between align-items-center"><span class="tile-name">Resources Requested By Mode per their organization - Aggregate</span><button class="more" type="button" aria-label="More"><svg width="14" height="4" fill="#8a9096"><circle cx="3" cy="2" r="1"/><circle cx="7" cy="2" r="1"/><circle cx="11" cy="2" r="1"/></svg></button></div>
          <div class="key d-flex"><span><i class="c-in"></i>delivery</span><span><i class="c-or"></i>pickup</span></div>
          <svg class="d-block w-100" viewBox="1487 746 708 365">
            <path d="M1539 775.500H2173M1539 928.500H2173" stroke="#eeeff0"/><path d="M1539 1082.500H2173" stroke="#dcdddf"/>
            <rect x="1581" y="1080" width="116" height="2" fill="#4350a1"/><rect x="1697" y="1076" width="116" height="6" fill="#d48be7"/><rect x="1899" y="1074" width="116" height="8" fill="#4350a1"/><rect x="2015" y="852" width="115" height="230" fill="#d48be7"/>
            <g class="t12"><text x="1519" y="780">400</text><text x="1519" y="934">200</text><text x="1527" y="1087">0</text></g>
            <g class="t11"><text x="1697" y="1097">Open</text><text x="2015" y="1097">Closed</text></g>
            <g class="t13"><text x="1639" y="1075">2</text><text x="1755" y="1071">7</text><text x="1957" y="1069">10</text><text x="2073" y="847">300</text></g>
          </svg>
        </article>
        <article class="tile tile-wide">
          <div class="tile-head tile-tall d-flex justify-content-between align-items-center"><span class="tile-name">Orders per Hour</span><button class="more" type="button" aria-label="More"><svg width="14" height="4" fill="#8a9096"><circle cx="3" cy="2" r="1"/><circle cx="7" cy="2" r="1"/><circle cx="11" cy="2" r="1"/></svg></button></div>
        </article>
      </div>
    </div>
    <div class="track d-flex flex-column align-items-center"><svg width="9" height="6"><path d="M0 6L4.500 0L9 6Z" fill="#8b8b8b"/></svg><div class="thumb"></div></div>
  </section>
</main>
<script src="https://cdn.jsdelivr.net/npm/bootstrap@5.3.0/dist/js/bootstrap.bundle.min.js"></script>
</body>
</html>
